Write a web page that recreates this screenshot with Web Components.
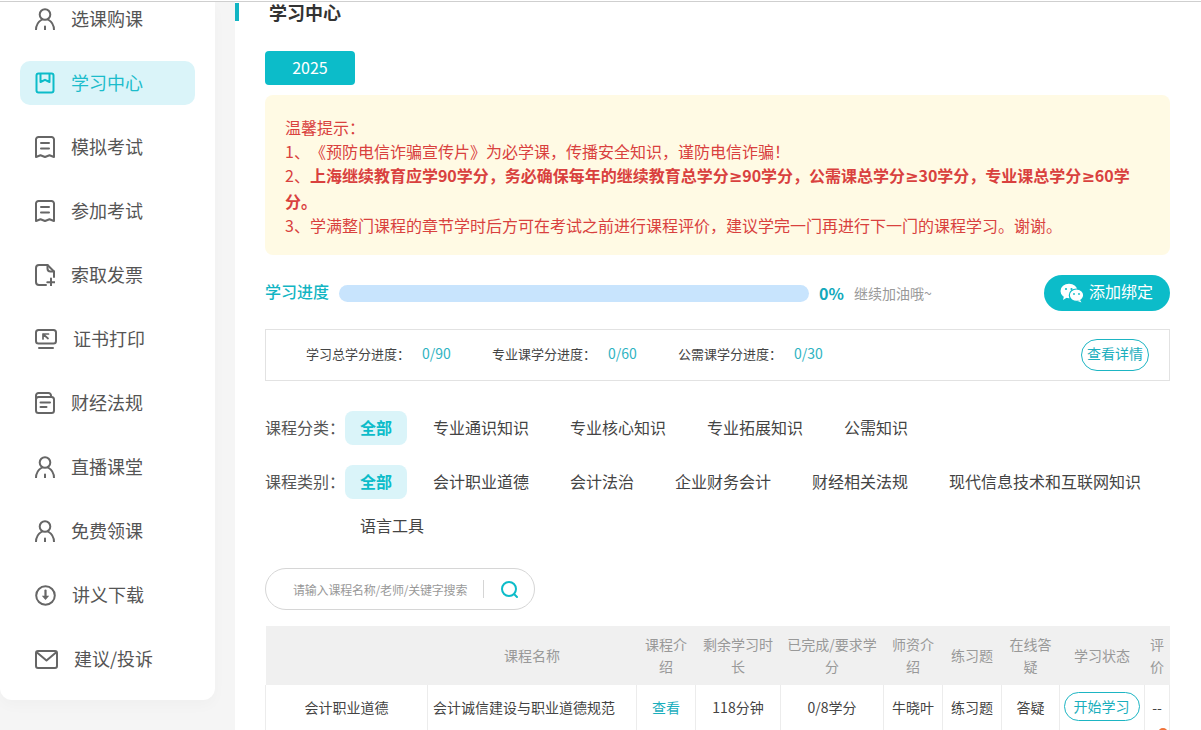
<!DOCTYPE html>
<html lang="zh-CN">
<head>
<meta charset="utf-8">
<title>学习中心</title>
<style>
html,body{margin:0;padding:0;height:100%;overflow:hidden;background:#f5f5f5;}
body{font-family:"Noto Sans CJK SC","Noto Sans",sans-serif;color:#333;text-spacing-trim:space-all;}
.ge{font-family:"DejaVu Sans",sans-serif;}
</style>
</head>
<body>
<x-app>
  <x-sidebar>
    <x-nav-item icon="person">选课购课</x-nav-item>
    <x-nav-item icon="book" active>学习中心</x-nav-item>
    <x-nav-item icon="ribbon">模拟考试</x-nav-item>
    <x-nav-item icon="ribbon">参加考试</x-nav-item>
    <x-nav-item icon="docplus">索取发票</x-nav-item>
    <x-nav-item icon="monitor">证书打印</x-nav-item>
    <x-nav-item icon="doclist">财经法规</x-nav-item>
    <x-nav-item icon="person">直播课堂</x-nav-item>
    <x-nav-item icon="person">免费领课</x-nav-item>
    <x-nav-item icon="download">讲义下载</x-nav-item>
    <x-nav-item icon="mail">建议/投诉</x-nav-item>
  </x-sidebar>
  <x-main>
    <x-heading>学习中心</x-heading>
    <x-year-tab>2025</x-year-tab>
    <x-notice>
      <div>温馨提示：</div>
      <div>1、《预防电信诈骗宣传片》为必学课，传播安全知识，谨防电信诈骗！</div>
      <div>2、<b>上海继续教育应学90学分，务必确保每年的继续教育总学分<span class="ge">≥</span>90学分，公需课总学分<span class="ge">≥</span>30学分，专业课总学分<span class="ge">≥</span>60学分。</b></div>
      <div>3、学满整门课程的章节学时后方可在考试之前进行课程评价，建议学完一门再进行下一门的课程学习。谢谢。</div>
    </x-notice>
    <x-progress></x-progress>
    <x-stats></x-stats>
    <x-filter-row label="课程分类：" items="全部,专业通识知识,专业核心知识,专业拓展知识,公需知识"></x-filter-row>
    <x-filter-row label="课程类别：" items="全部,会计职业道德,会计法治,企业财务会计,财经相关法规,现代信息技术和互联网知识,语言工具"></x-filter-row>
    <x-search></x-search>
    <x-course-table></x-course-table>
  </x-main>
</x-app>
<script>
const FONT = '"Noto Sans CJK SC","Noto Sans",sans-serif';
const TEAL = '#0cbcc9';

function shadow(el, html){
  const root = el.attachShadow({mode:'open'});
  root.innerHTML = html;
  return root;
}

customElements.define('x-app', class extends HTMLElement{
  constructor(){super();shadow(this,`<style>
    :host{display:block;height:730px;overflow:hidden;position:relative;background:#f5f5f5;font-family:${FONT};}
    .line{height:1px;background:#fff;border-bottom:1px solid #cfcfcf;}
    .row{display:flex;gap:20px;align-items:flex-start;}
  </style><div class="line"></div><div class="row"><slot></slot></div>`);}
});

customElements.define('x-sidebar', class extends HTMLElement{
  constructor(){super();shadow(this,`<style>
    :host{display:block;flex:none;width:215px;height:698px;background:#fff;border-radius:0 0 12px 12px;box-shadow:0 6px 14px rgba(0,0,0,.025);overflow:hidden;}
    nav{display:flex;flex-direction:column;gap:20px;margin-top:-5px;padding:0 20px;}
  </style><nav><slot></slot></nav>`);}
});

const ICONS = {
  person:[20,22,`<circle cx="10" cy="6.5" r="5.3"/><path d="M1 22c0-5.600 3-8.800 6-10.500M19 22c0-5.600-3-8.800-6-10.500M10 18.500V22"/>`],
  book:[20,22,`<rect x="1.500" y="1.500" width="17" height="19" rx="2"/><path d="M5.500 2v8l4.500-2.200L14.500 10V2"/>`],
  ribbon:[20,22,`<path d="M3.500 1h13A2.500 2.500 0 0 1 19 3.500V21l-4.500-1.800L10 21l-4.500-1.800L1 21V3.500A2.500 2.500 0 0 1 3.500 1z"/><path d="M6 7h8M6 12.500h8"/>`],
  docplus:[20,22,`<path d="M11 21H4a3 3 0 0 1-3-3V4a3 3 0 0 1 3-3h8.500L19 7.500V13"/><path d="M12.500 1v3.500a3 3 0 0 0 3 3H19"/><path d="M16 14.500V22M12.300 18.200h7.700"/>`],
  monitor:[22,20,`<rect x="1" y="1" width="20" height="13.500" rx="2.500"/><path d="M4 19h14"/><path d="M8 5h5.500L8 5zM8 5v5M8 5l5 4.500" stroke-width="1.700"/>`],
  doclist:[20,22,`<path d="M1 6V3.500A2.500 2.500 0 0 1 3.500 1h10A2.500 2.500 0 0 1 16 3.500V5"/><rect x="1" y="5" width="18" height="16" rx="2.500"/><path d="M5.500 10.500h9.500M5.500 15h6"/>`],
  download:[21,21,`<circle cx="10.500" cy="10.500" r="9.300"/><path d="M10.500 5.500v7" stroke-width="2.200"/><path d="M6.800 10.800h7.400l-3.700 4.200z" fill="#666" stroke="none"/>`],
  mail:[23,19,`<rect x="1" y="1" width="21" height="17" rx="2"/><path d="M2 2.500l9.500 8 9.500-8"/>`]
};

customElements.define('x-nav-item', class extends HTMLElement{
  constructor(){super();
    const [w,h,body]=ICONS[this.getAttribute('icon')];
    shadow(this,`<style>
      :host{display:flex;align-items:center;height:44px;padding-left:15px;border-radius:10px;color:#555;font-size:18px;white-space:nowrap;}
      :host([active]){background:#daf4f9;color:#1cbccb;}
      .t{line-height:40px;padding-bottom:2px;}
      svg{flex:none;margin-right:16px;fill:none;stroke:#666;stroke-width:2;stroke-linecap:round;stroke-linejoin:round;}
      :host([active]) svg{stroke:${TEAL};}
    </style><svg width="${w}" height="${h}" viewBox="0 0 ${w} ${h}">${body}</svg><span class="t"><slot></slot></span>`);
  }
});

customElements.define('x-main', class extends HTMLElement{
  constructor(){super();shadow(this,`<style>
    :host{display:block;flex:1;min-width:0;height:728px;background:#fff;padding:1px 31px 0 30px;box-sizing:border-box;}
  </style><slot></slot>`);}
});

customElements.define('x-heading', class extends HTMLElement{
  constructor(){super();shadow(this,`<style>
    :host{display:block;margin-left:-30px;height:18px;border-left:4px solid #12b5c3;padding-left:30px;font-size:18px;line-height:18px;font-weight:700;color:#333;}
  </style><slot></slot>`);}
});

customElements.define('x-year-tab', class extends HTMLElement{
  constructor(){super();shadow(this,`<style>
    :host{display:block;width:90px;height:34px;margin-top:30px;background:${TEAL};color:#fff;border-radius:4px;text-align:center;font-size:16px;line-height:33px;}
  </style><slot></slot>`);}
});

customElements.define('x-notice', class extends HTMLElement{
  constructor(){super();shadow(this,`<style>
    :host{display:block;margin-top:10px;padding:20px;background:#fffae4;border-radius:8px;color:#d9413e;font-size:16px;line-height:24px;box-sizing:border-box;height:160px;}
  </style><slot></slot>`);}
});

customElements.define('x-progress', class extends HTMLElement{
  constructor(){super();shadow(this,`<style>
    :host{display:flex;align-items:center;height:36px;margin-top:20px;}
    .t{font-size:16px;font-weight:500;color:#12b5c3;width:74px;flex:none;line-height:32px;padding-bottom:4px;}
    .bar{flex:none;width:470px;height:17px;border-radius:9px;background:#c8e4fd;}
    .pct{flex:none;width:35px;margin-left:10px;font-size:16px;font-weight:700;color:#12a9bb;}
    .tip{flex:1;font-size:14px;color:#999;}
    .btn{flex:none;width:126px;height:36px;border-radius:18px;background:${TEAL};color:#fff;font-size:16px;display:flex;align-items:center;gap:5px;padding-left:16px;box-sizing:border-box;}
    .btn span{line-height:30px;padding-bottom:4px;}
  </style>
  <span class="t">学习进度</span><div class="bar"></div><span class="pct">0%</span><span class="tip">继续加油哦~</span>
  <div class="btn"><svg width="24" height="20" viewBox="0 0 24 20">
    <ellipse cx="9" cy="8" rx="8.500" ry="7.300" fill="#fff"/><path d="M4 13l-1 4 4-2.500z" fill="#fff"/>
    <ellipse cx="16.500" cy="12.200" rx="7.200" ry="6.200" fill="#fff" stroke="${TEAL}" stroke-width="1.200"/><path d="M20 17l1.500 2.500-4-1.500z" fill="#fff"/>
    <circle cx="6" cy="6" r="1.100" fill="${TEAL}"/><circle cx="11.500" cy="6" r="1.100" fill="${TEAL}"/>
    <circle cx="14" cy="11" r=".9" fill="${TEAL}"/><circle cx="19" cy="11" r=".9" fill="${TEAL}"/>
  </svg><span>添加绑定</span></div>`);}
});

customElements.define('x-stats', class extends HTMLElement{
  constructor(){super();
    const cells=[['学习总学分进度：','0/90'],['专业课学分进度：','0/60'],['公需课学分进度：','0/30']];
    shadow(this,`<style>
      :host{display:flex;align-items:center;height:52px;margin-top:18px;border:1px solid #e2e2e2;box-sizing:border-box;padding:0 20px 0 40px;font-size:13px;color:#444;}
      .c{display:flex;align-items:center;width:186px;flex:none;white-space:nowrap;margin-bottom:4px;}
      .c b{font-weight:400;font-size:14px;color:#2fb3c2;margin-left:12px;}
      .more{margin-left:auto;width:68px;height:32px;box-sizing:border-box;border:1px solid #1db5c3;border-radius:16px;text-align:center;line-height:27px;color:#1aaebd;font-size:14px;}
    </style>${cells.map(c=>`<span class="c"><span>${c[0]}</span><b>${c[1]}</b></span>`).join('')}<span class="more">查看详情</span>`);
  }
});

customElements.define('x-filter-row', class extends HTMLElement{
  constructor(){super();
    const items=this.getAttribute('items').split(',');
    shadow(this,`<style>
      :host{display:flex;margin-bottom:10px;padding-bottom:10px;font-size:16px;color:#444;}
      :host(:first-of-type){margin-top:30px;}
      .l{flex:none;width:80px;height:34px;line-height:32px;color:#555;}
      .w{flex:1;display:flex;flex-wrap:wrap;column-gap:11px;row-gap:10px;min-width:0;}
      .i{height:34px;line-height:32px;padding:0 15px;border-radius:8px;white-space:nowrap;}
      .i.on{background:#daf4f9;color:${TEAL};font-weight:700;}
    </style><span class="l">${this.getAttribute('label')}</span><div class="w">${items.map((t,i)=>`<span class="i${i===0?' on':''}">${t}</span>`).join('')}</div>`);
  }
});

customElements.define('x-search', class extends HTMLElement{
  constructor(){super();shadow(this,`<style>
    :host{display:flex;align-items:center;width:270px;height:42px;box-sizing:border-box;margin-top:15px;border:1px solid #d6d6d6;border-radius:21px;padding-left:27px;}
    .p{flex:none;width:190px;font-size:12px;color:#999;white-space:nowrap;letter-spacing:-.2px;}
    .s{flex:none;width:1px;height:18px;background:#d5d5d5;}
    svg{margin-left:16px;flex:none;}
  </style><span class="p">请输入课程名称/老师/关键字搜索</span><span class="s"></span>
  <svg width="19" height="19" viewBox="0 0 19 19" fill="none" stroke="${TEAL}" stroke-width="2" stroke-linecap="round"><circle cx="9" cy="9" r="7"/><path d="M14.500 14.500l2.500 2.500"/></svg>`);}
});

customElements.define('x-course-table', class extends HTMLElement{
  constructor(){super();
    const w=[162,209,59,85,103,59,59,58,85,25];
    const head=['','课程名称','课程介绍','剩余学习时长','已完成/要求学分','师资介绍','练习题','在线答疑','学习状态','评价'];
    shadow(this,`<style>
      :host{display:block;margin-top:16px;position:relative;font-size:14px;color:#444;}
      table{width:904px;table-layout:fixed;border-collapse:collapse;}
      th{background:#f0f0f0;height:59px;padding:0 5px 2px;font-weight:400;color:#999;line-height:22px;text-align:center;box-sizing:border-box;}
      td{height:46px;padding:0 5px 2px;border:1px solid #ececec;text-align:center;line-height:22px;border-top:0;box-sizing:border-box;}
      td.name{text-align:left;white-space:nowrap;}
      .link{color:#1aaebd;}
      .start{display:block;width:76px;height:29px;margin:0 auto;position:relative;left:-1.5px;box-sizing:border-box;border:1px solid #1db5c3;border-radius:15px;color:#1aaebd;line-height:26px;}
      .hot{position:absolute;left:893px;top:102px;width:10px;height:10px;border-radius:50% 50% 0 0;background:#f0733a;}
    </style>
    <table><colgroup>${w.map(x=>`<col style="width:${x}px">`).join('')}</colgroup>
      <thead><tr>${head.map(h=>`<th>${h}</th>`).join('')}</tr></thead>
      <tbody><tr>
        <td>会计职业道德</td><td class="name">会计诚信建设与职业道德规范</td><td><span class="link">查看</span></td>
        <td>118分钟</td><td>0/8学分</td><td>牛晓叶</td><td>练习题</td><td>答疑</td>
        <td><span class="start">开始学习</span></td><td>--</td>
      </tr></tbody>
    </table><span class="hot"></span>`);
  }
});
</script>
</body>
</html>
